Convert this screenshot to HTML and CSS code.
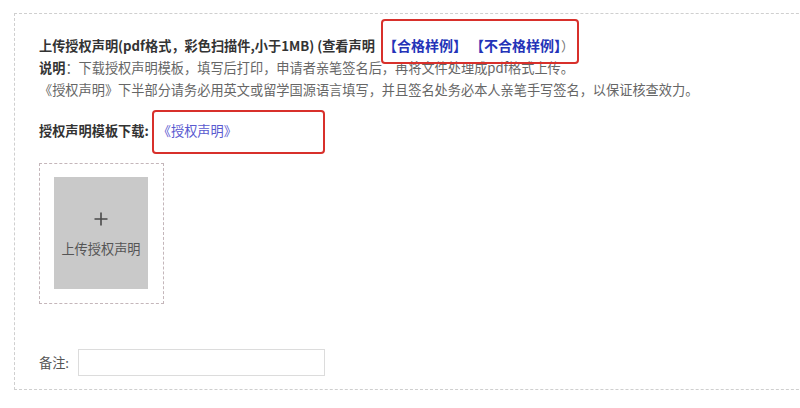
FILE: index.html
```html
<!DOCTYPE html>
<html lang="zh-CN">
<head>
<meta charset="utf-8">
<title>上传授权声明</title>
<link rel="stylesheet" href="styles.css">
</head>
<body>
<div class="panel">
  <div class="intro">
    <p class="title">上传授权声明(pdf格式，彩色扫描件,小于1MB) (查看声明 <span class="mark mark-samples"><a class="sample" href="#">【合格样例】</a> <a class="sample" href="#">【不合格样例】</a><span class="close">）</span></span></p>
    <p class="note"><b>说明</b>：下载授权声明模板，填写后打印，申请者亲笔签名后，再将文件处理成pdf格式上传。</p>
    <p class="note">《授权声明》下半部分请务必用英文或留学国源语言填写，并且签名处务必本人亲笔手写签名，以保证核查效力。</p>
  </div>
  <p class="download">授权声明模板下载:<span class="mark mark-download"><a class="doc" href="#">《授权声明》</a></span></p>
  <div class="upload">
    <div class="upload-tile">
      <svg class="plus" width="16" height="16" viewBox="0 0 16 16"><path d="M8 1.5v13M1.5 8h13" stroke="#4a4a4a" stroke-width="1.6" fill="none"/></svg>
      <span class="upload-text">上传授权声明</span>
    </div>
  </div>
  <div class="remark">
    <label class="remark-label">备注:</label>
    <input class="remark-input" type="text">
  </div>
</div>
</body>
</html>
```
FILE: styles.css
```css
html, body {
  margin: 0;
  padding: 0;
  background: #ffffff;
  overflow: hidden;
}
body {
  font-family: "Noto Sans CJK SC", "Noto Sans", "Liberation Sans", sans-serif;
  font-size: 13.2px;
  color: #666;
}
.panel {
  margin: 13px 0 0 14px;
  width: 820px;
  height: 377px;
  box-sizing: border-box;
  border: 1px dashed #cfcfcf;
  border-right: none;
  padding: 20px 0 0 24px;
}
p { margin: 0; }
.intro p { line-height: 22px; white-space: nowrap; }
.title { font-weight: bold; color: #333; }
.note b { color: #333; }
.note { color: #666; }
.mark { position: relative; }
.mark::after {
  content: "";
  position: absolute;
  border: 2px solid #d8302b;
  border-radius: 4px;
  pointer-events: none;
}
.mark-samples { margin-left: 5px; }
.mark-samples::after { left: -2px; top: -17px; width: 194px; height: 41px; }
.sample { color: #2433b8; text-decoration: none; font-weight: bold; font-size: 14px; }
.close { color: #777; font-weight: normal; }
.download {
  margin-top: 19px;
  line-height: 22px;
  font-weight: bold;
  color: #333;
}
.mark-download { margin-left: 9px; }
.doc { color: #5a5ad0; text-decoration: none; font-weight: normal; }
.mark-download::after { left: -6px; top: -11px; width: 169px; height: 40px; }
.upload {
  margin-top: 21px;
  width: 125px;
  height: 141px;
  box-sizing: border-box;
  border: 1px dashed #c4b6ba;
  padding: 13px 14px;
}
.upload-tile {
  width: 94px;
  height: 112px;
  background: #c9c9c9;
  display: flex;
  flex-direction: column;
  align-items: center;
  padding-top: 34px;
  box-sizing: border-box;
  gap: 13px;
}
.plus { display: block; }
.upload-text { color: #555; line-height: 18px; }
.remark {
  margin-top: 45px;
  display: flex;
  align-items: center;
  gap: 9px;
}
.remark-label { color: #555; }
.remark-input {
  width: 247px;
  height: 27px;
  box-sizing: border-box;
  border: 1px solid #dcdcdc;
  margin: 0;
  padding: 0 6px;
  outline: none;
}
```
